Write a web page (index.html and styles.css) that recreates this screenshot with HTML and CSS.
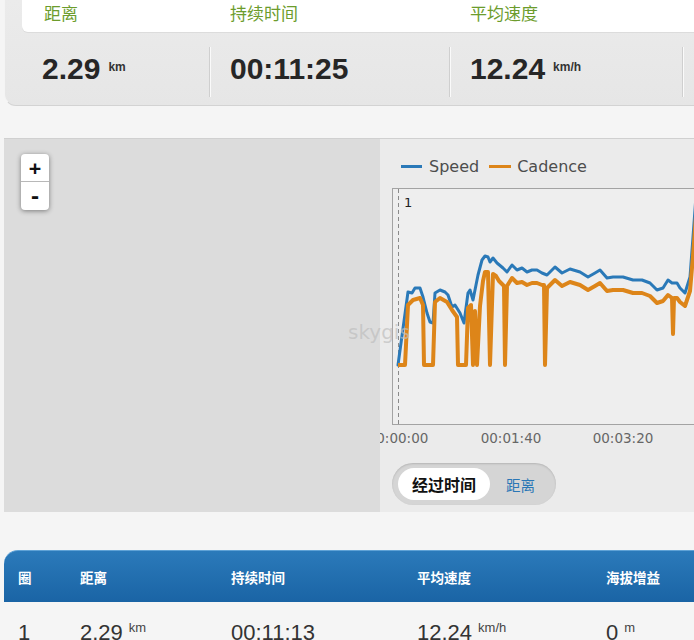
FILE: index.html
```html
<!DOCTYPE html>
<html lang="zh">
<head>
<meta charset="utf-8">
<title>Activity</title>
<link rel="stylesheet" href="styles.css">
</head>
<body>
<section class="stats">
  <div class="stat-labels">
    <span class="sl sl1">距离</span>
    <span class="sl sl2">持续时间</span>
    <span class="sl sl3">平均速度</span>
  </div>
  <div class="stat-values">
    <div class="sv sv1"><span class="num">2.29</span><span class="unit">km</span></div>
    <div class="sv sv2"><span class="num">00:11:25</span></div>
    <div class="sv sv3"><span class="num">12.24</span><span class="unit">km/h</span></div>
    <div class="sv sv4"></div>
  </div>
</section>

<section class="activity">
  <div class="map">
    <div class="zoom">
      <span class="zbtn zin">+</span>
      <span class="zbtn zout">-</span>
    </div>
  </div>
  <div class="chart">
    <div class="legend">
      <span class="lg lg-speed"></span><span class="lg-text">Speed</span>
      <span class="lg lg-cad"></span><span class="lg-text">Cadence</span>
    </div>
    <svg class="plot" width="314" height="262" viewBox="0 0 314 262">
      <rect x="12.5" y="2.5" width="330" height="236" fill="#eeeeee" stroke="#a3a3a3" stroke-width="1"/>
      <line x1="18.5" y1="3" x2="18.5" y2="238" stroke="#8a8a8a" stroke-width="1" stroke-dasharray="4 3"/>
      <text x="24" y="21" class="lap-mark">1</text>
      <polyline fill="none" stroke="#2a79b8" stroke-width="3" stroke-linejoin="round" stroke-linecap="round"
        points="18,179 28,106 32,107 35,102 40,102 43,111 47,127 50,136 53,137 55,107 60,104 65,106 68,109 72,121 75,119 80,127 84,137 88,107 90,104 93,114 98,89 102,74 105,70 108,71 110,76 113,72 117,77 123,82 127,86 132,79 137,84 142,82 147,86 152,84 157,84 162,87 167,89 175,81 182,87 190,83 200,86 208,91 215,87 220,84 227,92 233,91 243,91 253,94 262,94 270,97 277,104 283,102 288,94 292,97 297,97 300,102 305,107 310,91 313,51 316,10"/>
      <polyline fill="none" stroke="#dd8519" stroke-width="4" stroke-linejoin="round"
        points="18,179 25,179 28,119 33,114 40,112 43,119 44,179 53,179 55,116 60,112 67,116 72,124 77,131 78,179 86,179 88,122 91,119 93,179 95,125 97,179 100,120 103,95 105,86 108,86 110,179 113,88 116,90 119,95 124,100 125,179 127,100 132,92 137,97 142,96 147,99 152,97 157,97 162,99 164,99 165,179 167,102 175,94 182,100 190,96 200,99 208,104 215,100 220,97 227,105 233,104 243,104 253,107 262,107 270,110 277,117 283,115 288,109 292,112 293,148 294,112 297,112 300,116 305,120 310,105 313,70 316,30"/>
      <text x="18" y="257" class="axis">00:00:00</text>
      <text x="131" y="257" class="axis">00:01:40</text>
      <text x="243" y="257" class="axis">00:03:20</text>
    </svg>
    <div class="toggle">
      <span class="tg tg-on">经过时间</span>
      <span class="tg tg-off">距离</span>
    </div>
  </div>
  <div class="watermark">skygis</div>
</section>

<section class="laps">
  <div class="lap-grid lap-head">
    <span>圈</span>
    <span>距离</span>
    <span>持续时间</span>
    <span>平均速度</span>
    <span>海拔增益</span>
  </div>
  <div class="lap-grid lap-row">
    <span>1</span>
    <span>2.29<span class="runit">km</span></span>
    <span>00:11:13</span>
    <span>12.24<span class="runit">km/h</span></span>
    <span>0<span class="runit">m</span></span>
  </div>
</section>
</body>
</html>
```

FILE: styles.css
```css
* { box-sizing: border-box; }

html, body {
  margin: 0;
  padding: 0;
  background: #f5f5f5;
  overflow: hidden;
}

body {
  width: 694px;
  height: 640px;
  font-family: "Liberation Sans", Arial, sans-serif;
}

/* ---------- summary stats ---------- */
.stats {
  margin-left: 4px;
  background: linear-gradient(#ebebeb, #e6e6e6);
  border-bottom: 1px solid #d3d3d3;
  border-left: 1px solid #f4f4f4;
  border-radius: 0 0 0 12px;
}

.stat-labels {
  display: flex;
  margin-left: 17px;
  height: 32px;
  background: #ffffff;
  border-radius: 0 0 0 6px;
  box-shadow: 0 1px 0 #dcdcdc;
}

.sl {
  font-family: "Noto Sans CJK SC", sans-serif;
  font-size: 17px;
  line-height: 26px;
  color: #6c9c2c;
}
.sl1 { width: 187px; padding-left: 22px; }
.sl2 { width: 240px; padding-left: 21px; }
.sl3 { width: 233px; padding-left: 21px; }

.stat-values {
  display: flex;
  height: 73px;
  padding: 15px 0 8px;
}

.sv {
  display: flex;
  align-items: center;
  padding-bottom: 7px;
  height: 50px;
  white-space: nowrap;
}
.sv1 { width: 204px; padding-left: 37px; }
.sv2, .sv3, .sv4 {
  border-left: 1px solid #cfcfcf;
  box-shadow: inset 1px 0 0 #fafafa;
}
.sv2 { width: 240px; padding-left: 20px; }
.sv3 { width: 233px; padding-left: 20px; }
.sv4 { flex: 1; }

.num {
  font-size: 30px;
  font-weight: bold;
  color: #262626;
  line-height: 30px;
}

.unit {
  font-size: 12px;
  font-weight: bold;
  color: #333;
  margin-left: 8px;
  align-self: flex-start;
  margin-top: 13px;
}

/* ---------- map + chart ---------- */
.activity {
  position: relative;
  display: flex;
  margin: 32px 0 0 4px;
  height: 374px;
  border-top: 1px solid #d0d0d0;
}

.map {
  width: 376px;
  background: #dcdcdc;
  padding: 15px 0 0 17px;
}

.zoom {
  display: flex;
  flex-direction: column;
  width: 28px;
  height: 56px;
  background: #ffffff;
  border-radius: 4px;
  box-shadow: 0 1px 5px rgba(0, 0, 0, 0.45);
}

.zbtn {
  height: 28px;
  display: flex;
  align-items: center;
  justify-content: center;
  font-family: "DejaVu Sans Mono", monospace;
  font-weight: bold;
  font-size: 20px;
  color: #111;
}
.zin { border-bottom: 1px solid #b8b8b8; }

.chart {
  flex: 1;
  background: #ebebeb;
  overflow: hidden;
  display: flex;
  flex-direction: column;
  padding-top: 17px;
}

.legend {
  display: flex;
  align-items: center;
  height: 20px;
  padding-left: 21px;
  font-family: "DejaVu Sans", sans-serif;
  font-size: 16px;
  color: #4d4d4d;
  white-space: nowrap;
}

.lg {
  display: inline-block;
  width: 21px;
  height: 3px;
  margin-right: 7px;
}
.lg-speed { background: #2a79b8; }
.lg-cad { background: #dd8519; margin-left: 10px; width: 22px; margin-right: 6px; }

.plot {
  display: block;
  margin-top: 10px;
  flex: none;
}

.lap-mark {
  font-family: "DejaVu Sans", sans-serif;
  font-size: 13px;
  fill: #222;
}

.axis {
  font-family: "DejaVu Sans", sans-serif;
  font-size: 13.5px;
  fill: #666;
  text-anchor: middle;
}

.toggle {
  display: flex;
  align-items: center;
  width: 164px;
  height: 42px;
  margin: 15px 0 0 12px;
  padding: 0 6px;
  background: #d5d5d5;
  border-radius: 21px;
  box-shadow: inset 0 1px 2px rgba(0, 0, 0, 0.15);
}

.tg {
  font-family: "Noto Sans CJK SC", sans-serif;
  white-space: nowrap;
}

.tg-on {
  width: 92px;
  height: 32px;
  line-height: 32px;
  text-align: center;
  background: #ffffff;
  border-radius: 16px;
  font-size: 16px;
  font-weight: bold;
  color: #111;
}

.tg-off {
  margin-left: 16px;
  font-size: 14.5px;
  color: #2a77b6;
}

.watermark {
  position: absolute;
  left: 344px;
  top: 181px;
  font-family: "DejaVu Sans", sans-serif;
  font-size: 20px;
  color: rgba(190, 190, 190, 0.7);
  pointer-events: none;
}

/* ---------- laps table ---------- */
.laps {
  margin: 38px 0 0 4px;
}

.lap-grid {
  display: grid;
  grid-template-columns: 62px 151px 186px 189px 1fr;
  padding-left: 14px;
  white-space: nowrap;
}

.lap-head {
  height: 52px;
  align-items: center;
  border-radius: 14px 0 0 0;
  background: linear-gradient(#2b7aba, #1a64a5);
  border-top: 1px solid #5fa2d6;
  font-family: "Noto Sans CJK SC", sans-serif;
  font-weight: bold;
  font-size: 13.5px;
  color: #ffffff;
}

.lap-row {
  align-items: baseline;
  padding-top: 13px;
  font-size: 22px;
  line-height: 26px;
  color: #333;
}

.runit {
  font-size: 13px;
  color: #444;
  margin-left: 6px;
  vertical-align: 8px;
}
```
